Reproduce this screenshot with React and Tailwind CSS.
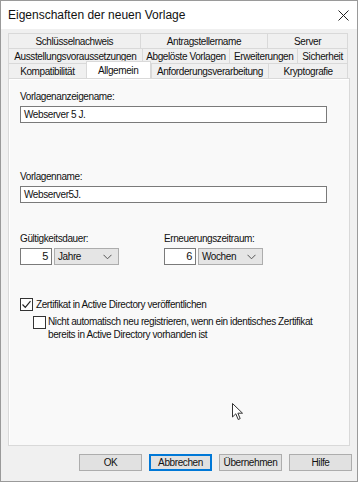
const font = "font-['Liberation_Sans',Arial,sans-serif]";

function Tab({ w, label, active }) {
  return (
    <div
      className={
        "flex items-center justify-center whitespace-nowrap border-t border-l border-[#d9d9d9] text-[10px] tracking-[-0.4px] text-[#111] " +
        (active ? "bg-white h-[17px] -mt-[2px] relative z-10 border-r" : "bg-[#f0f0f0] h-[15px]")
      }
      style={{ width: w }}
    >
      {label}
    </div>
  );
}

function TabRow({ tabs }) {
  return (
    <div className="flex border-r border-[#d9d9d9]">
      {tabs.map((t) => (
        <Tab key={t[0]} label={t[0]} w={t[1]} active={t[2]} />
      ))}
    </div>
  );
}

function Chevron() {
  return (
    <svg width="9" height="6" viewBox="0 0 9 6" className="ml-auto mr-[6px]">
      <path d="M0.5 0.8 L4.5 4.8 L8.5 0.8" fill="none" stroke="#555" strokeWidth="1" />
    </svg>
  );
}

function NumberWithUnit({ value, unit }) {
  return (
    <div className="flex gap-[2px] mt-[2px]">
      <div className="w-[32px] h-[17px] bg-white border border-[#7a7a7a] flex items-center justify-end pr-[3px] text-[11px]">
        {value}
      </div>
      <div className="w-[65px] h-[17px] bg-[#e5e5e5] border border-[#adadad] flex items-center pl-[3px]">
        {unit}
        <Chevron />
      </div>
    </div>
  );
}

function Check({ checked }) {
  return (
    <div className="w-[13px] h-[13px] border border-[#333] bg-white flex items-center justify-center shrink-0">
      {checked && (
        <svg width="11" height="11" viewBox="0 0 11 11">
          <path d="M1.5 5.5 L4.3 8.3 L9.5 2.2" fill="none" stroke="#222" strokeWidth="1.2" />
        </svg>
      )}
    </div>
  );
}

function Btn({ label, focused }) {
  return (
    <div
      className={
        "w-[63px] h-[17px] flex items-center justify-center bg-[#e1e1e1] " +
        (focused ? "border-2 border-[#0078d7]" : "border border-[#adadad]")
      }
    >
      {label}
    </div>
  );
}

export default function App() {
  return (
    <div className={"w-[358px] h-[482px] bg-[#f0f0f0] border border-[#9a9a9a] flex flex-col relative text-[#111] text-[10px] tracking-[-0.4px] " + font}>
      {/* title bar */}
      <div className="h-[28px] bg-white flex items-center pl-[7px] pr-[8px] shrink-0 tracking-normal">
        <span className="text-[12px]">Eigenschaften der neuen Vorlage</span>
        <svg width="11" height="11" viewBox="0 0 11 11" className="ml-auto">
          <path d="M0.5 0.5 L10.5 10.5 M10.5 0.5 L0.5 10.5" stroke="#222" strokeWidth="1" />
        </svg>
      </div>

      {/* tabs */}
      <div className="pl-[7px] pr-[9px] pt-[4px] flex flex-col">
        <TabRow
          tabs={[
            ["Schlüsselnachweis", 132],
            ["Antragstellername", 128],
            ["Server", 80],
          ]}
        />
        <TabRow
          tabs={[
            ["Ausstellungsvoraussetzungen", 134],
            ["Abgelöste Vorlagen", 88],
            ["Erweiterungen", 68],
            ["Sicherheit", 50],
          ]}
        />
        <TabRow
          tabs={[
            ["Kompatibilität", 78],
            ["Allgemein", 65, true],
            ["Anforderungsverarbeitung", 118],
            ["Kryptografie", 79],
          ]}
        />
      </div>

      {/* panel */}
      <div className="mx-[7px] h-[368px] border border-[#d9d9d9] bg-[#f9f9f9] shadow-[inset_1px_1px_0_#fff] px-[11px] pt-[11px]">
        <div className="leading-[14px]">Vorlagenanzeigename:</div>
        <div className="mt-[2px] w-[307px] h-[17px] bg-white border border-[#7a7a7a] flex items-center pl-[3px]">
          Webserver 5 J.
        </div>

        <div className="leading-[14px] mt-[47px]">Vorlagenname:</div>
        <div className="mt-[2px] w-[307px] h-[17px] bg-white border border-[#7a7a7a] flex items-center pl-[3px]">
          Webserver5J.
        </div>

        <div className="flex mt-[29px]">
          <div className="w-[144px]">
            <div className="leading-[14px]">Gültigkeitsdauer:</div>
            <NumberWithUnit value="5" unit="Jahre" />
          </div>
          <div>
            <div className="leading-[14px]">Erneuerungszeitraum:</div>
            <NumberWithUnit value="6" unit="Wochen" />
          </div>
        </div>

        <div className="flex items-center gap-[3px] mt-[32px]">
          <Check checked />
          <span>Zertifikat in Active Directory veröffentlichen</span>
        </div>
        <div className="flex gap-[2px] mt-[4px] ml-[13px]">
          <Check />
          <span className="leading-[13px] mt-[-1px]">
            Nicht automatisch neu registrieren, wenn ein identisches Zertifikat
            <br />
            bereits in Active Directory vorhanden ist
          </span>
        </div>
      </div>

      {/* buttons */}
      <div className="flex justify-end gap-[7px] pr-[5px] mt-[8px]">
        <Btn label="OK" />
        <Btn label="Abbrechen" focused />
        <Btn label="Übernehmen" />
        <Btn label="Hilfe" />
      </div>

      {/* mouse cursor */}
      <svg width="12" height="18" viewBox="0 0 12 18" className="absolute left-[231px] top-[402px]">
        <path d="M0.5 0.5 L0.5 14 L3.8 10.8 L6.2 16.5 L8.2 15.6 L5.9 10.2 L10.5 10.2 Z" fill="#fff" stroke="#333" strokeWidth="1" />
      </svg>
    </div>
  );
}
